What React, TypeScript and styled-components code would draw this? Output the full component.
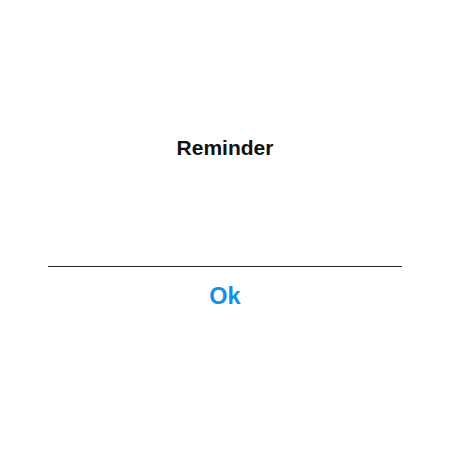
import styled, { createGlobalStyle } from 'styled-components';

const GlobalStyle = createGlobalStyle`
  html, body {
    margin: 0;
    padding: 0;
    background: #ffffff;
  }

  body {
    font-family: 'Liberation Sans', Arial, sans-serif;
  }
`;

const Screen = styled.div`
  width: 450px;
  height: 450px;
  display: flex;
  justify-content: center;
  background: #ffffff;
`;

const Dialog = styled.div`
  width: 354px;
  padding-top: 136px;
  display: flex;
  flex-direction: column;
  align-items: stretch;
`;

const Title = styled.h2`
  margin: 0;
  font-size: 21px;
  line-height: 24px;
  font-weight: 700;
  color: #111111;
  text-align: center;
`;

const Message = styled.div`
  height: 106px;
`;

const Divider = styled.hr`
  margin: 0;
  border: none;
  height: 1px;
  background: #222222;
`;

const ActionButton = styled.button`
  margin-top: 15px;
  align-self: center;
  padding: 0;
  border: none;
  background: transparent;
  font-family: 'Liberation Sans', Arial, sans-serif;
  font-size: 23.5px;
  line-height: 28px;
  font-weight: 700;
  color: #1590e4;
  cursor: pointer;
`;

function App() {
  return (
    <>
      <GlobalStyle />
      <Screen>
        <Dialog>
          <Title>Reminder</Title>
          <Message />
          <Divider />
          <ActionButton>Ok</ActionButton>
        </Dialog>
      </Screen>
    </>
  );
}

export default App;
